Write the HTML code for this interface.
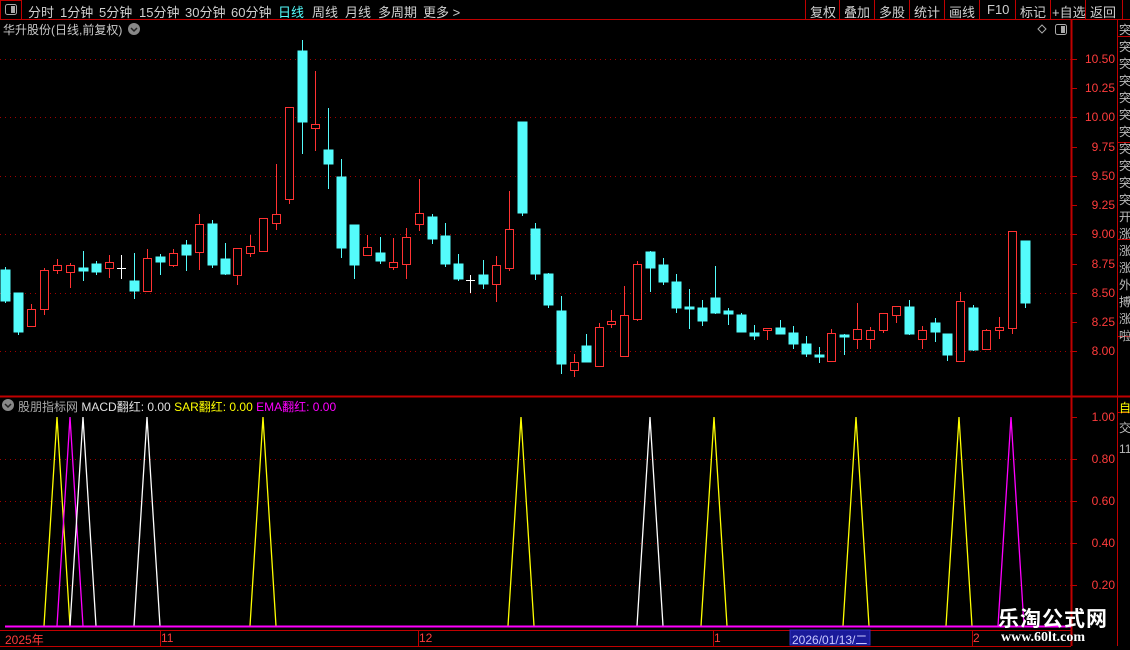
<!DOCTYPE html>
<html><head><meta charset="utf-8"><style>
*{margin:0;padding:0;box-sizing:border-box}
body{width:1130px;height:650px;background:#000;overflow:hidden;position:relative;font-family:"Liberation Sans","Noto Sans CJK SC",sans-serif;color:#c8c8c8}
.a{position:absolute;white-space:nowrap}
.tb{font-size:13px;top:2px;color:#d0d0d0}
.ax{font-size:12px;color:#ff3c3c;right:15px;position:absolute}
</style></head><body>
<svg class="a" style="left:0;top:0" width="1130" height="650">
<line x1="0" y1="19.5" x2="1130" y2="19.5" stroke="#c00000"/>
<rect x="0.5" y="0.5" width="21" height="19" fill="none" stroke="#c00000"/>
<rect x="5.5" y="4.5" width="11" height="10" rx="2" fill="none" stroke="#aaa"/>
<rect x="11" y="6" width="4" height="7" fill="#aaa"/>
<g stroke="#c00000"><line x1="805.5" y1="0" x2="805.5" y2="20"/><line x1="839.5" y1="0" x2="839.5" y2="20"/><line x1="874.5" y1="0" x2="874.5" y2="20"/><line x1="909.5" y1="0" x2="909.5" y2="20"/><line x1="944.5" y1="0" x2="944.5" y2="20"/><line x1="979.5" y1="0" x2="979.5" y2="20"/><line x1="1015.5" y1="0" x2="1015.5" y2="20"/><line x1="1050.5" y1="0" x2="1050.5" y2="20"/><line x1="1085.5" y1="0" x2="1085.5" y2="20"/><line x1="1122.5" y1="0" x2="1122.5" y2="20"/></g>
<line x1="1071.5" y1="20" x2="1071.5" y2="646" stroke="#c00000" stroke-width="2"/>
<line x1="1117.5" y1="20" x2="1117.5" y2="646" stroke="#c00000"/>
<g stroke="#c00000"><line x1="1117" y1="36.5" x2="1130" y2="36.5"/><line x1="1117" y1="142.5" x2="1130" y2="142.5"/><line x1="1117" y1="239.5" x2="1130" y2="239.5"/><line x1="1117" y1="336.5" x2="1130" y2="336.5"/><line x1="1117" y1="412.5" x2="1130" y2="412.5"/></g>
<line x1="0" y1="396.5" x2="1130" y2="396.5" stroke="#c00000" stroke-width="2"/>
<line x1="0" y1="630.5" x2="1071" y2="630.5" stroke="#c00000"/>
<line x1="0" y1="646.5" x2="1071" y2="646.5" stroke="#c00000"/>
<g stroke="#a00000" stroke-dasharray="1,4">
<line x1="0" y1="59.5" x2="1071" y2="59.5"/><line x1="0" y1="117.5" x2="1071" y2="117.5"/><line x1="0" y1="176.5" x2="1071" y2="176.5"/><line x1="0" y1="234.5" x2="1071" y2="234.5"/><line x1="0" y1="293.5" x2="1071" y2="293.5"/><line x1="0" y1="351.5" x2="1071" y2="351.5"/>
<line x1="0" y1="459.5" x2="1071" y2="459.5"/><line x1="0" y1="501.5" x2="1071" y2="501.5"/><line x1="0" y1="543.5" x2="1071" y2="543.5"/><line x1="0" y1="585.5" x2="1071" y2="585.5"/>
</g>
<g stroke="#c00000"><line x1="1071" y1="59.5" x2="1077" y2="59.5"/><line x1="1071" y1="88.5" x2="1077" y2="88.5"/><line x1="1071" y1="117.5" x2="1077" y2="117.5"/><line x1="1071" y1="147.5" x2="1077" y2="147.5"/><line x1="1071" y1="176.5" x2="1077" y2="176.5"/><line x1="1071" y1="205.5" x2="1077" y2="205.5"/><line x1="1071" y1="234.5" x2="1077" y2="234.5"/><line x1="1071" y1="264.5" x2="1077" y2="264.5"/><line x1="1071" y1="293.5" x2="1077" y2="293.5"/><line x1="1071" y1="322.5" x2="1077" y2="322.5"/><line x1="1071" y1="351.5" x2="1077" y2="351.5"/>
<line x1="1071" y1="417.5" x2="1077" y2="417.5"/><line x1="1071" y1="459.5" x2="1077" y2="459.5"/><line x1="1071" y1="501.5" x2="1077" y2="501.5"/><line x1="1071" y1="543.5" x2="1077" y2="543.5"/><line x1="1071" y1="585.5" x2="1077" y2="585.5"/>
<line x1="160.5" y1="630" x2="160.5" y2="646"/><line x1="418.5" y1="630" x2="418.5" y2="646"/><line x1="713.5" y1="630" x2="713.5" y2="646"/><line x1="972.5" y1="630" x2="972.5" y2="646"/></g>
<g stroke-width="1" shape-rendering="crispEdges">
<g stroke="#54fcfc" fill="#54fcfc">
<line x1="5.5" y1="267" x2="5.5" y2="303"/><rect x="1" y="270" width="9" height="31"/>
<line x1="18.5" y1="293" x2="18.5" y2="335"/><rect x="14" y="293" width="9" height="39"/>
<line x1="83.5" y1="251" x2="83.5" y2="281"/><rect x="79" y="268" width="9" height="3"/>
<line x1="96.5" y1="261" x2="96.5" y2="275"/><rect x="92" y="264" width="9" height="8"/>
<line x1="134.5" y1="253" x2="134.5" y2="299"/><rect x="130" y="281" width="9" height="10"/>
<line x1="160.5" y1="254" x2="160.5" y2="275"/><rect x="156" y="257" width="9" height="5"/>
<line x1="186.5" y1="240" x2="186.5" y2="271"/><rect x="182" y="245" width="9" height="10"/>
<line x1="212.5" y1="220" x2="212.5" y2="268"/><rect x="208" y="224" width="9" height="41"/>
<line x1="225.5" y1="243" x2="225.5" y2="275"/><rect x="221" y="259" width="9" height="15"/>
<line x1="302.5" y1="40" x2="302.5" y2="154"/><rect x="298" y="51" width="9" height="71"/>
<line x1="328.5" y1="108" x2="328.5" y2="189"/><rect x="324" y="150" width="9" height="14"/>
<line x1="341.5" y1="159" x2="341.5" y2="258"/><rect x="337" y="177" width="9" height="71"/>
<line x1="354.5" y1="225" x2="354.5" y2="279"/><rect x="350" y="225" width="9" height="40"/>
<line x1="380.5" y1="237" x2="380.5" y2="264"/><rect x="376" y="253" width="9" height="8"/>
<line x1="432.5" y1="214" x2="432.5" y2="244"/><rect x="428" y="217" width="9" height="22"/>
<line x1="445.5" y1="223" x2="445.5" y2="267"/><rect x="441" y="236" width="9" height="28"/>
<line x1="458.5" y1="254" x2="458.5" y2="281"/><rect x="454" y="264" width="9" height="15"/>
<line x1="483.5" y1="260" x2="483.5" y2="289"/><rect x="479" y="275" width="9" height="9"/>
<line x1="522.5" y1="122" x2="522.5" y2="216"/><rect x="518" y="122" width="9" height="91"/>
<line x1="535.5" y1="223" x2="535.5" y2="280"/><rect x="531" y="229" width="9" height="45"/>
<line x1="548.5" y1="273" x2="548.5" y2="308"/><rect x="544" y="274" width="9" height="31"/>
<line x1="561.5" y1="296" x2="561.5" y2="374"/><rect x="557" y="311" width="9" height="53"/>
<line x1="586.5" y1="334" x2="586.5" y2="362"/><rect x="582" y="346" width="9" height="16"/>
<line x1="650.5" y1="251" x2="650.5" y2="292"/><rect x="646" y="252" width="9" height="16"/>
<line x1="663.5" y1="258" x2="663.5" y2="285"/><rect x="659" y="265" width="9" height="17"/>
<line x1="676.5" y1="274" x2="676.5" y2="313"/><rect x="672" y="282" width="9" height="26"/>
<line x1="689.5" y1="289" x2="689.5" y2="329"/><rect x="685" y="307" width="9" height="2"/>
<line x1="702.5" y1="300" x2="702.5" y2="326"/><rect x="698" y="308" width="9" height="13"/>
<line x1="715.5" y1="266" x2="715.5" y2="314"/><rect x="711" y="298" width="9" height="15"/>
<line x1="728.5" y1="308" x2="728.5" y2="325"/><rect x="724" y="311" width="9" height="3"/>
<line x1="741.5" y1="313" x2="741.5" y2="332"/><rect x="737" y="315" width="9" height="17"/>
<line x1="754.5" y1="325" x2="754.5" y2="340"/><rect x="750" y="333" width="9" height="3"/>
<line x1="780.5" y1="320" x2="780.5" y2="334"/><rect x="776" y="328" width="9" height="6"/>
<line x1="793.5" y1="326" x2="793.5" y2="349"/><rect x="789" y="333" width="9" height="11"/>
<line x1="806.5" y1="336" x2="806.5" y2="357"/><rect x="802" y="344" width="9" height="10"/>
<line x1="819.5" y1="347" x2="819.5" y2="363"/><rect x="815" y="355" width="9" height="2"/>
<line x1="844.5" y1="334" x2="844.5" y2="355"/><rect x="840" y="335" width="9" height="2"/>
<line x1="909.5" y1="300" x2="909.5" y2="335"/><rect x="905" y="307" width="9" height="27"/>
<line x1="935.5" y1="318" x2="935.5" y2="342"/><rect x="931" y="323" width="9" height="9"/>
<line x1="947.5" y1="334" x2="947.5" y2="361"/><rect x="943" y="334" width="9" height="21"/>
<line x1="973.5" y1="305" x2="973.5" y2="351"/><rect x="969" y="308" width="9" height="42"/>
<line x1="1025.5" y1="241" x2="1025.5" y2="308"/><rect x="1021" y="241" width="9" height="62"/>
</g>
<g stroke="#ff3232" fill="#000">
<line x1="31.5" y1="304" x2="31.5" y2="327"/><rect x="27.5" y="309.5" width="8" height="17"/>
<line x1="44.5" y1="268" x2="44.5" y2="315"/><rect x="40.5" y="270.5" width="8" height="39"/>
<line x1="57.5" y1="259" x2="57.5" y2="274"/><rect x="53.5" y="265.5" width="8" height="5"/>
<line x1="70.5" y1="263" x2="70.5" y2="288"/><rect x="66.5" y="265.5" width="8" height="7"/>
<line x1="109.5" y1="255" x2="109.5" y2="278"/><rect x="105.5" y="262.5" width="8" height="6"/>
<line x1="147.5" y1="249" x2="147.5" y2="292"/><rect x="143.5" y="258.5" width="8" height="33"/>
<line x1="173.5" y1="249" x2="173.5" y2="267"/><rect x="169.5" y="253.5" width="8" height="12"/>
<line x1="199.5" y1="214" x2="199.5" y2="270"/><rect x="195.5" y="224.5" width="8" height="28"/>
<line x1="237.5" y1="248" x2="237.5" y2="285"/><rect x="233.5" y="248.5" width="8" height="27"/>
<line x1="250.5" y1="235" x2="250.5" y2="257"/><rect x="246.5" y="246.5" width="8" height="7"/>
<line x1="263.5" y1="218" x2="263.5" y2="252"/><rect x="259.5" y="218.5" width="8" height="33"/>
<line x1="276.5" y1="164" x2="276.5" y2="230"/><rect x="272.5" y="214.5" width="8" height="9"/>
<line x1="289.5" y1="107" x2="289.5" y2="204"/><rect x="285.5" y="107.5" width="8" height="92"/>
<line x1="315.5" y1="71" x2="315.5" y2="151"/><rect x="311.5" y="124.5" width="8" height="4"/>
<line x1="367.5" y1="235" x2="367.5" y2="256"/><rect x="363.5" y="247.5" width="8" height="8"/>
<line x1="393.5" y1="238" x2="393.5" y2="270"/><rect x="389.5" y="262.5" width="8" height="5"/>
<line x1="406.5" y1="228" x2="406.5" y2="279"/><rect x="402.5" y="237.5" width="8" height="27"/>
<line x1="419.5" y1="179" x2="419.5" y2="231"/><rect x="415.5" y="213.5" width="8" height="11"/>
<line x1="496.5" y1="256" x2="496.5" y2="302"/><rect x="492.5" y="265.5" width="8" height="19"/>
<line x1="509.5" y1="191" x2="509.5" y2="271"/><rect x="505.5" y="229.5" width="8" height="39"/>
<line x1="574.5" y1="354" x2="574.5" y2="377"/><rect x="570.5" y="362.5" width="8" height="8"/>
<line x1="599.5" y1="323" x2="599.5" y2="367"/><rect x="595.5" y="327.5" width="8" height="39"/>
<line x1="611.5" y1="310" x2="611.5" y2="328"/><rect x="607.5" y="321.5" width="8" height="3"/>
<line x1="624.5" y1="286" x2="624.5" y2="357"/><rect x="620.5" y="315.5" width="8" height="41"/>
<line x1="637.5" y1="261" x2="637.5" y2="321"/><rect x="633.5" y="264.5" width="8" height="55"/>
<line x1="767.5" y1="328" x2="767.5" y2="340"/><rect x="763.5" y="328.5" width="8" height="2"/>
<line x1="831.5" y1="329" x2="831.5" y2="362"/><rect x="827.5" y="333.5" width="8" height="28"/>
<line x1="857.5" y1="303" x2="857.5" y2="349"/><rect x="853.5" y="329.5" width="8" height="10"/>
<line x1="870.5" y1="327" x2="870.5" y2="349"/><rect x="866.5" y="330.5" width="8" height="9"/>
<line x1="883.5" y1="313" x2="883.5" y2="333"/><rect x="879.5" y="313.5" width="8" height="17"/>
<line x1="896.5" y1="306" x2="896.5" y2="323"/><rect x="892.5" y="306.5" width="8" height="9"/>
<line x1="922.5" y1="326" x2="922.5" y2="349"/><rect x="918.5" y="330.5" width="8" height="9"/>
<line x1="960.5" y1="292" x2="960.5" y2="362"/><rect x="956.5" y="301.5" width="8" height="60"/>
<line x1="986.5" y1="329" x2="986.5" y2="350"/><rect x="982.5" y="330.5" width="8" height="19"/>
<line x1="999.5" y1="317" x2="999.5" y2="339"/><rect x="995.5" y="327.5" width="8" height="3"/>
<line x1="1012.5" y1="231" x2="1012.5" y2="334"/><rect x="1008.5" y="231.5" width="8" height="97"/>
</g>
<g stroke="#fff">
<line x1="121.5" y1="255" x2="121.5" y2="279"/><line x1="117" y1="268.5" x2="126" y2="268.5"/>
<line x1="470.5" y1="275" x2="470.5" y2="293"/><line x1="466" y1="280.5" x2="475" y2="280.5"/>
</g>
</g>
<g fill="none" stroke-width="1.3">
<polyline points="44,626 57,417 70,626" stroke="#ffff00"/>
<polyline points="57,626 70,417 83,626" stroke="#ff00ff"/>
<polyline points="70,626 83,417 96,626" stroke="#fff"/>
<polyline points="134,626 147,417 160,626" stroke="#fff"/>
<polyline points="250,626 263,417 276,626" stroke="#ffff00"/>
<polyline points="508,626 521,417 534,626" stroke="#ffff00"/>
<polyline points="637,626 650,417 663,626" stroke="#fff"/>
<polyline points="701,626 714,417 727,626" stroke="#ffff00"/>
<polyline points="843,626 856,417 869,626" stroke="#ffff00"/>
<polyline points="946,626 959,417 972,626" stroke="#ffff00"/>
<polyline points="998,626 1011,417 1024,626" stroke="#ff00ff"/>
</g>
<line x1="5" y1="626.5" x2="1071" y2="626.5" stroke="#ff00ff" stroke-width="2"/>
<circle cx="134" cy="29" r="6" fill="#888"/><polyline points="131,28 134,31 137,28" fill="none" stroke="#222" stroke-width="1.5"/>
<circle cx="8" cy="405" r="6" fill="#888"/><polyline points="5,404 8,407 11,404" fill="none" stroke="#222" stroke-width="1.5"/>
<polygon points="1042,25 1046,29 1042,33 1038,29" fill="none" stroke="#aaa"/>
<rect x="1055.5" y="24.5" width="11" height="10" rx="2" fill="none" stroke="#aaa"/><rect x="1061" y="26" width="4" height="7" fill="#aaa"/>
<rect x="790" y="630" width="80" height="15" fill="#1a1a9a" stroke="#3030c0"/>
</svg>
<div class="a tb" style="left:28px">分时</div>
<div class="a tb" style="left:60px">1分钟</div>
<div class="a tb" style="left:99px">5分钟</div>
<div class="a tb" style="left:139px">15分钟</div>
<div class="a tb" style="left:185px">30分钟</div>
<div class="a tb" style="left:231px">60分钟</div>
<div class="a tb" style="left:278px;color:#54fcfc">日线</div>
<div class="a tb" style="left:312px">周线</div>
<div class="a tb" style="left:345px">月线</div>
<div class="a tb" style="left:378px">多周期</div>
<div class="a tb" style="left:423px">更多 &gt;</div>
<div class="a tb" style="left:810px">复权</div>
<div class="a tb" style="left:844px">叠加</div>
<div class="a tb" style="left:879px">多股</div>
<div class="a tb" style="left:914px">统计</div>
<div class="a tb" style="left:949px">画线</div>
<div class="a tb" style="left:987px">F10</div>
<div class="a tb" style="left:1020px">标记</div>
<div class="a tb" style="left:1052px">+自选</div>
<div class="a tb" style="left:1090px">返回</div>
<div class="a" style="left:3px;top:21px;font-size:12px;color:#c8c8c8">华升股份(日线,前复权)</div>
<div class="a" style="left:18px;top:398px;font-size:12px"><span style="color:#aaa">股朋指标网</span> <span style="color:#e0e0e0">MACD翻红: 0.00</span> <span style="color:#ffff00">SAR翻红: 0.00</span> <span style="color:#ff00ff">EMA翻红: 0.00</span></div>
<div class="ax" style="top:52px">10.50</div><div class="ax" style="top:81px">10.25</div><div class="ax" style="top:110px">10.00</div><div class="ax" style="top:140px">9.75</div><div class="ax" style="top:169px">9.50</div><div class="ax" style="top:198px">9.25</div><div class="ax" style="top:227px">9.00</div><div class="ax" style="top:257px">8.75</div><div class="ax" style="top:286px">8.50</div><div class="ax" style="top:315px">8.25</div><div class="ax" style="top:344px">8.00</div>
<div class="ax" style="top:410px">1.00</div><div class="ax" style="top:452px">0.80</div><div class="ax" style="top:494px">0.60</div><div class="ax" style="top:536px">0.40</div><div class="ax" style="top:578px">0.20</div>
<div class="a" style="left:5px;top:631px;font-size:12px;color:#ff3c3c">2025年</div>
<div class="a" style="left:161px;top:631px;font-size:12px;color:#ff3c3c">11</div>
<div class="a" style="left:419px;top:631px;font-size:12px;color:#ff3c3c">12</div>
<div class="a" style="left:714px;top:631px;font-size:12px;color:#ff3c3c">1</div>
<div class="a" style="left:792px;top:631px;font-size:12px;color:#c8c8ff">2026/01/13/二</div>
<div class="a" style="left:973px;top:631px;font-size:12px;color:#ff3c3c">2</div>
<div class="a" style="left:1119px;top:22px;height:372px;overflow:hidden;font-size:12px;line-height:17px;color:#bbb;width:11px;white-space:normal">突突突突突突突突突突突开涨涨涨外搏涨啦</div>
<div class="a" style="left:1119px;top:399px;font-size:12px;color:#ffff00">自</div>
<div class="a" style="left:1119px;top:418px;height:180px;overflow:hidden;font-size:12px;line-height:21px;color:#bbb;width:11px;white-space:normal">交1111111</div>
<div class="a" style="left:998px;top:603px;font-size:21px;font-weight:bold;color:#fff;letter-spacing:1px">乐淘公式网</div>
<div class="a" style="left:1001px;top:630px;font-size:14px;font-weight:bold;color:#fff;font-family:'Liberation Serif',serif">www.60lt.com</div>
</body></html>
